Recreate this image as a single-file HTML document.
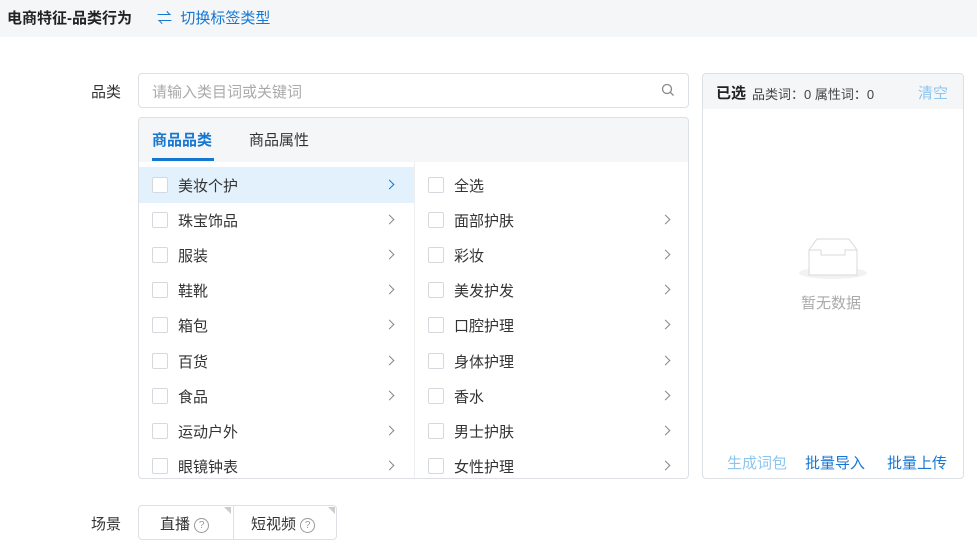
<!DOCTYPE html>
<html><head><meta charset="utf-8"><style>
*{box-sizing:border-box;margin:0;padding:0}
body{width:977px;height:548px;background:#fff;font-family:"Liberation Sans","Noto Sans CJK SC",sans-serif;color:#333;position:relative;overflow:hidden;font-size:15px}
.hdr{position:absolute;left:0;top:0;width:977px;height:37px;background:#f5f6f7}
.abs{position:absolute;white-space:nowrap}
.box{position:absolute;border:1px solid #dcdfe3;border-radius:4px;background:#fff}
.cb{position:absolute;width:16px;height:16px;border:1px solid #d5d8dc;border-radius:2px;background:#fff}
.arr{position:absolute;width:7px;height:7px;border-right:1.3px solid #888;border-top:1.3px solid #888;transform:rotate(45deg)}
.blue{color:#1677d2}
</style></head><body>
<div class="hdr"></div>
<div class="abs" style="left:7px;top:7px;font-size:15px;font-weight:bold;color:#222">电商特征-品类行为</div>
<div class="abs blue" style="left:157px;top:7px;font-size:15px">⇌ &nbsp;切换标签类型</div>

<div class="abs" style="left:91px;top:81px;color:#333">品类</div>
<div class="box" style="left:138px;top:73px;width:551px;height:35px"></div>
<div class="abs" style="left:152px;top:81px;color:#aaa">请输入类目词或关键词</div>
<svg class="abs" style="left:661px;top:83px" width="14" height="14" viewBox="0 0 14 14"><circle cx="6" cy="6" r="4.5" fill="none" stroke="#888" stroke-width="1.3"/><line x1="9.3" y1="9.3" x2="12.5" y2="12.5" stroke="#888" stroke-width="1.3"/></svg>

<div class="box" style="left:138px;top:117px;width:551px;height:362px;overflow:hidden">
<div style="position:absolute;left:0;top:0;width:551px;height:44px;background:#f5f6f7"></div>
<div style="position:absolute;left:0;top:49px;width:275px;height:36px;background:#e3f1fc"></div>
<div style="position:absolute;left:275px;top:44px;width:1px;height:320px;background:#eceef0"></div>
</div>
<div class="abs blue" style="left:152px;top:129px;font-weight:bold">商品品类</div>
<div class="abs" style="left:152px;top:158px;width:62px;height:3px;background:#1677d2"></div>
<div class="abs" style="left:249px;top:129px">商品属性</div>

<div id="rows"></div>

<div class="box" style="left:702px;top:73px;width:262px;height:406px;overflow:hidden">
<div style="position:absolute;left:0;top:0;width:262px;height:35px;background:#f5f6f7"></div>
</div>
<div class="abs" style="left:716px;top:82px;font-weight:bold;color:#222">已选</div>
<div class="abs" style="left:752px;top:84px;font-size:13px;color:#444">品类词：0 属性词：0</div>
<div class="abs" style="left:918px;top:82px;color:#8cc5ee">清空</div>
<svg class="abs" style="left:797px;top:237px" width="72" height="44" viewBox="0 0 72 44"><ellipse cx="36" cy="36" rx="34" ry="6" fill="#f2f2f2"/><path d="M12 13 L20 2 L52 2 L60 13 L60 38 L12 38 Z" fill="#fff" stroke="#d9d9d9"/><path d="M12 13 L24 13 L24 18 L48 18 L48 13 L60 13" fill="none" stroke="#d9d9d9"/></svg>
<div class="abs" style="left:801px;top:292px;color:#aaa">暂无数据</div>
<div class="abs" style="left:727px;top:452px;color:#8cc5ee">生成词包</div>
<div class="abs blue" style="left:805px;top:452px">批量导入</div>
<div class="abs blue" style="left:887px;top:452px">批量上传</div>

<div class="abs" style="left:91px;top:513px">场景</div>
<div class="box" style="left:138px;top:505px;width:199px;height:35px"></div>
<div class="abs" style="left:233px;top:506px;width:1px;height:33px;background:#dcdfe3"></div>
<div class="abs" style="left:224px;top:507px;width:0;height:0;border-top:7px solid #ccc;border-left:7px solid transparent"></div>
<div class="abs" style="left:328px;top:507px;width:0;height:0;border-top:7px solid #ccc;border-left:7px solid transparent"></div>
<div class="abs" style="left:160px;top:513px">直播 <span style="display:inline-block;width:15px;height:15px;border:1px solid #999;border-radius:50%;font-size:10px;line-height:13px;text-align:center;color:#999;vertical-align:1px">?</span></div>
<div class="abs" style="left:251px;top:513px">短视频 <span style="display:inline-block;width:15px;height:15px;border:1px solid #999;border-radius:50%;font-size:10px;line-height:13px;text-align:center;color:#999;vertical-align:1px">?</span></div>

<script>
var L=["美妆个护","珠宝饰品","服装","鞋靴","箱包","百货","食品","运动户外","眼镜钟表"];
var R=["全选","面部护肤","彩妆","美发护发","口腔护理","身体护理","香水","男士护肤","女性护理"];
var h="";
for(var i=0;i<9;i++){var y=185+i*35.1;
h+='<div class="cb" style="left:152px;top:'+(y-8)+'px"></div><div class="abs" style="left:178px;top:'+(y-10)+'px">'+L[i]+'</div><div class="arr" style="left:386px;top:'+(y-4)+'px;'+(i==0?'border-color:#1677d2':'')+'"></div>';
h+='<div class="cb" style="left:428px;top:'+(y-8)+'px"></div><div class="abs" style="left:454px;top:'+(y-10)+'px">'+R[i]+'</div>';
if(i>0)h+='<div class="arr" style="left:662px;top:'+(y-4)+'px"></div>';}
document.getElementById("rows").innerHTML=h;
</script>
</body></html>
